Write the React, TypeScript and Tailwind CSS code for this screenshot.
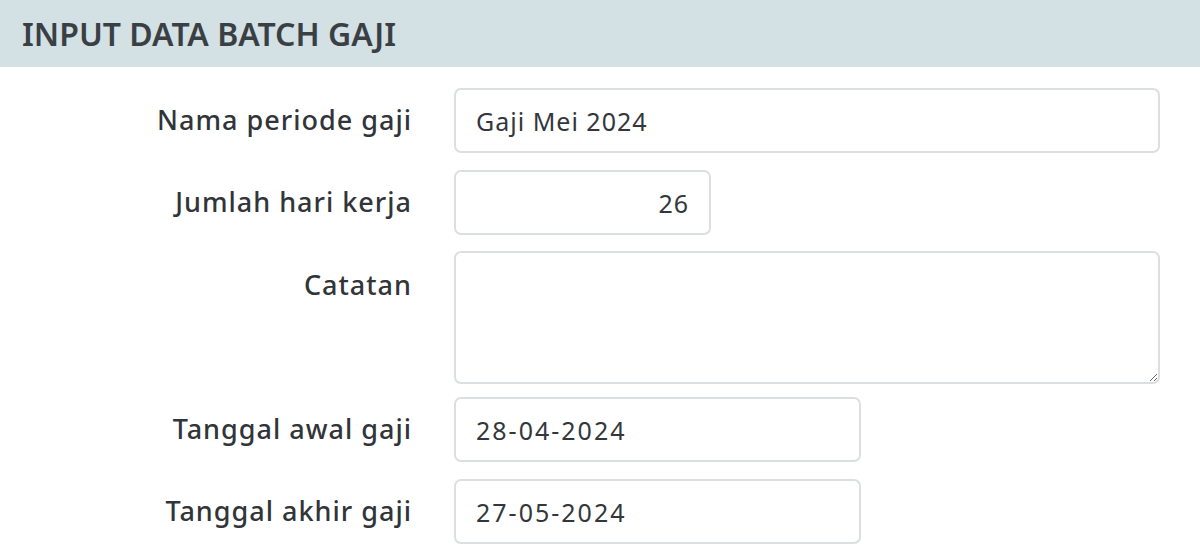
import React, { useState } from "react";

const font = { fontFamily: "'Noto Sans', Lato, sans-serif" };

const Row = ({
  label,
  top,
  className = "",
  children,
}: {
  label: string;
  top?: boolean;
  className?: string;
  children: React.ReactNode;
}) => (
  <div className={`flex gap-[42px] ${top ? "items-start" : "items-center"} ${className}`}>
    <label
      className={`w-[412px] shrink-0 text-right text-[27px] font-medium tracking-[1px] text-[#313539] ${top ? "pt-[14px]" : ""}`}
    >
      {label}
    </label>
    {children}
  </div>
);

const inputCls =
  "h-[65px] rounded-[7px] border-2 border-[#dcdfe2] bg-white px-[20px] text-[25px] tracking-[1px] text-[#33373b] outline-none";

export default function App() {
  const [nama, setNama] = useState("Gaji Mei 2024");
  const [hari, setHari] = useState("26");
  const [catatan, setCatatan] = useState("");
  const [awal, setAwal] = useState("28-04-2024");
  const [akhir, setAkhir] = useState("27-05-2024");

  return (
    <div className="min-h-screen w-full bg-white" style={font}>
      <div className="flex h-[67px] items-center bg-[#d3e0e4] px-[22px]">
        <h1 className="text-[32px] font-semibold text-[#3a3f44]">INPUT DATA BATCH GAJI</h1>
      </div>

      <div className="flex flex-col pt-[21px]">
        <Row label="Nama periode gaji">
          <input value={nama} onChange={(e) => setNama(e.target.value)} className={`${inputCls} w-[706px]`} />
        </Row>
        <Row label="Jumlah hari kerja" className="mt-[17px]">
          <input
            value={hari}
            onChange={(e) => setHari(e.target.value)}
            className={`${inputCls} w-[257px] text-right`}
          />
        </Row>
        <Row label="Catatan" top className="mt-[16px]">
          <textarea
            value={catatan}
            onChange={(e) => setCatatan(e.target.value)}
            className="h-[133px] w-[706px] rounded-[7px] border-2 border-[#dcdfe2] bg-white px-[20px] py-[14px] text-[25px] text-[#33373b] outline-none"
          />
        </Row>
        <Row label="Tanggal awal gaji" className="mt-[13px]">
          <input
            value={awal}
            onChange={(e) => setAwal(e.target.value)}
            className={`${inputCls} w-[407px] tracking-[2px]`}
          />
        </Row>
        <Row label="Tanggal akhir gaji" className="mt-[17px]">
          <input
            value={akhir}
            onChange={(e) => setAkhir(e.target.value)}
            className={`${inputCls} w-[407px] tracking-[2px]`}
          />
        </Row>
      </div>
    </div>
  );
}
